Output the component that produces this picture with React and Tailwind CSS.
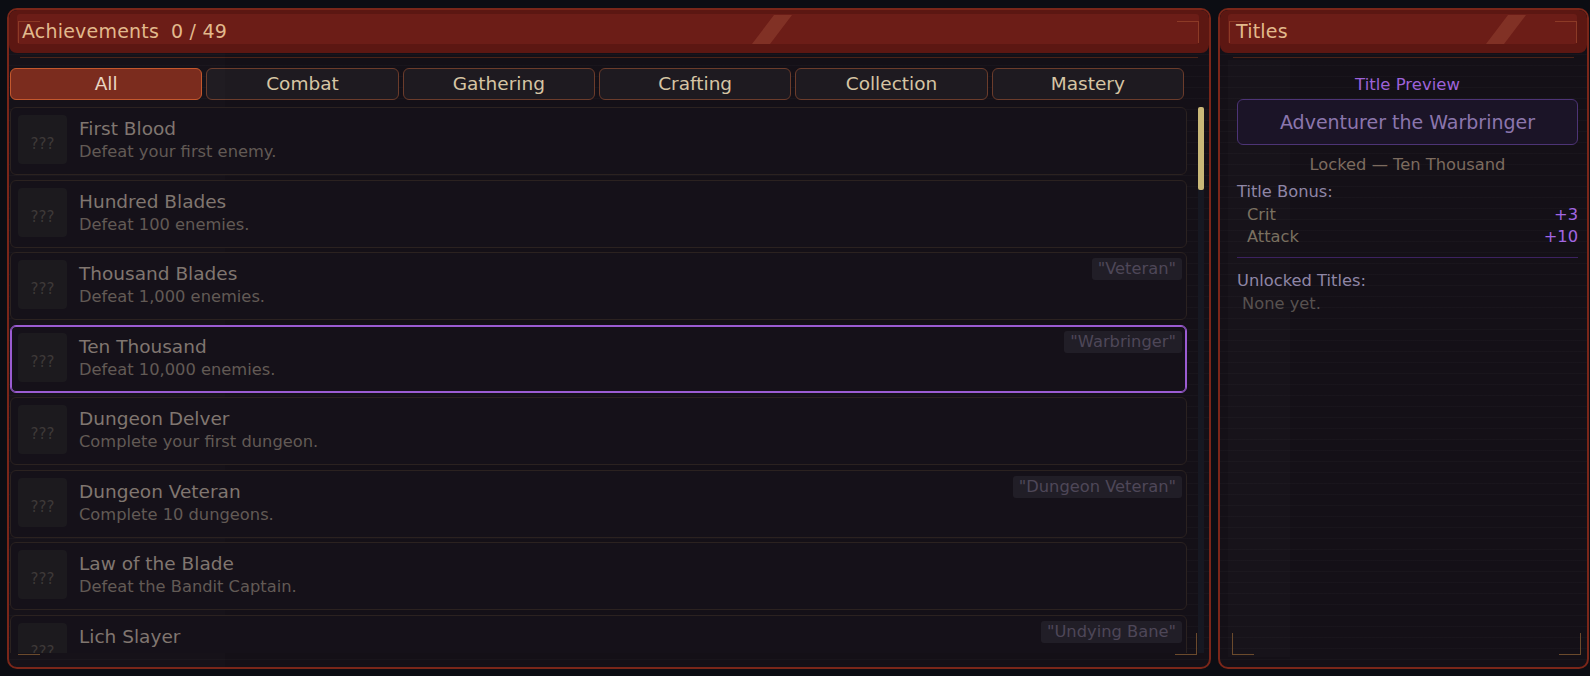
import React from "react";

const tabs = ["All", "Combat", "Gathering", "Crafting", "Collection", "Mastery"];

const achievements = [
  { name: "First Blood", desc: "Defeat your first enemy." },
  { name: "Hundred Blades", desc: "Defeat 100 enemies." },
  { name: "Thousand Blades", desc: "Defeat 1,000 enemies.", title: "Veteran" },
  { name: "Ten Thousand", desc: "Defeat 10,000 enemies.", title: "Warbringer", selected: true },
  { name: "Dungeon Delver", desc: "Complete your first dungeon." },
  { name: "Dungeon Veteran", desc: "Complete 10 dungeons.", title: "Dungeon Veteran" },
  { name: "Law of the Blade", desc: "Defeat the Bandit Captain." },
  { name: "Lich Slayer", desc: "Defeat the Lich King.", title: "Undying Bane" },
];

const scan =
  "bg-[repeating-linear-gradient(180deg,rgba(255,255,255,0.018)_0px,rgba(255,255,255,0.018)_1px,transparent_1px,transparent_11px)]";

function Bracket({ className }) {
  return <div className={`absolute w-[22px] h-[22px] border-[#6b4a2c] pointer-events-none ${className}`} />;
}

function PanelHeader({ children, stripeLeft, pad }) {
  return (
    <div className="relative h-[43px] rounded-[8px] bg-[#5c1712] overflow-hidden shrink-0">
      <div className="absolute left-[8px] right-[10px] top-[4px] h-[30px] rounded-[3px] bg-[#6c1d17]" />
      <div
        className="absolute top-[5px] h-[29px] w-[40px] bg-[#8a3b2c] opacity-70 [clip-path:polygon(55%_0,100%_0,45%_100%,0_100%)]"
        style={{ left: stripeLeft }}
      />
      <Bracket className="left-[9px] top-[11px] w-[22px] h-[20px] border-l border-t border-[#8c3a26]" />
      <Bracket className="right-[10px] top-[11px] h-[22px] border-r border-t border-[#8c3a26]" />
      <div className={`relative h-[42px] flex items-center ${pad} text-[19px] text-[#e2b98c] tracking-[0.2px]`}>
        {children}
      </div>
    </div>
  );
}

function Row({ a }) {
  return (
    <div
      className={`relative h-[68px] shrink-0 rounded-[6px] border flex ${
        a.selected
          ? "border-[#9b5cd2] shadow-[inset_0_0_0_1px_#9b5cd2] bg-[#151119]"
          : "border-[#2b2220] bg-[#151119]"
      }`}
    >
      <div className="ml-[7px] mt-[7px] w-[49px] h-[49px] rounded-[4px] bg-[#1c1a1e] flex items-center justify-center">
        <span className="translate-y-[5px] text-[15px] text-[#3e3938]">???</span>
      </div>
      <div className="ml-[12px] pt-[10px]">
        <div className="text-[18.5px] leading-[22px] text-[#807670]">{a.name}</div>
        <div className="mt-[2px] text-[16.3px] leading-[20px] text-[#625a55]">{a.desc}</div>
      </div>
      {a.title && (
        <div className="absolute right-[4px] top-[5px] h-[22px] px-[6px] rounded-[3px] bg-[#211e27] text-[16.3px] leading-[22px] text-[#4e4758]">
          "{a.title}"
        </div>
      )}
    </div>
  );
}

export default function App() {
  return (
    <div className="w-[1590px] h-[676px] overflow-hidden bg-[#0c0d13] flex gap-[7px] pl-[7px] pt-[8px] font-['DejaVu_Sans',sans-serif]">
      {/* achievements panel */}
      <div className={`relative w-[1204px] h-[661px] rounded-[10px] border-2 border-[#7a2619] bg-[#141017] ${scan} flex flex-col overflow-hidden`}>
        <div className="absolute left-0 top-0 bottom-0 w-[216px] bg-[#ffffff] opacity-[0.012] pointer-events-none" />
        <PanelHeader stripeLeft="743px" pad="pl-[13px]">
          <span>Achievements</span>
          <span className="ml-[12px]">0 / 49</span>
        </PanelHeader>
        <div className="mt-[4px] mx-[11px] h-px bg-[#4b2317] shrink-0" />
        <div className="mt-[10px] ml-[1px] w-[1174px] grid grid-cols-6 gap-[4px] shrink-0">
          {tabs.map((t, i) => (
            <div
              key={t}
              className={`h-[32px] rounded-[6px] border flex items-center justify-center text-[18.5px] ${
                i === 0
                  ? "bg-[#7a2a1c] border-[#c4572b] text-[#ead6c2]"
                  : "bg-[#1e1a20] border-[#6b3c2b] text-[#d6c5a4]"
              }`}
            >
              {t}
            </div>
          ))}
        </div>
        <div className="mt-[7px] flex h-[546px] shrink-0">
          <div className="ml-[1px] w-[1177px] flex flex-col gap-[4.5px] overflow-hidden">
            {achievements.map((a) => (
              <Row key={a.name} a={a} />
            ))}
          </div>
          <div className="ml-[11px] w-[6px] flex flex-col">
            <div className="h-[83px] rounded-[2px] bg-[#c9b878]" />
            <div className="flex-1 bg-[#161822]" />
          </div>
        </div>
        <Bracket className="left-[9px] bottom-[12px] border-b" />
        <Bracket className="right-[12px] bottom-[12px] border-r border-b" />
      </div>

      {/* titles panel */}
      <div className={`relative w-[371px] h-[661px] rounded-[10px] border-2 border-[#7a2619] bg-[#141017] ${scan} flex flex-col overflow-hidden`}>
        <div className="absolute left-[8px] top-[50px] bottom-[10px] w-[62px] bg-[#ffffff] opacity-[0.015] pointer-events-none" />
        <PanelHeader stripeLeft="266px" pad="pl-[16px]">
          <span>Titles</span>
        </PanelHeader>
        <div className="mt-[4px] mx-[13px] h-px bg-[#4b2317] shrink-0" />
        <div className="relative pl-[17px] pr-[9px] flex flex-col">
          <div className="mt-[17px] text-center text-[16.5px] leading-[20px] text-[#9d62d8]">Title Preview</div>
          <div className="mt-[4px] h-[46px] rounded-[6px] border border-[#4d3476] bg-[#1b1427] flex items-center justify-center text-[19px] text-[#8b76ad]">
            Adventurer the Warbringer
          </div>
          <div className="mt-[10px] text-center text-[16.3px] leading-[20px] text-[#7c6b5f]">Locked — Ten Thousand</div>
          <div className="mt-[6px] text-[16.3px] leading-[22px] text-[#8f86a6]">Title Bonus:</div>
          <div className="mt-[1px] pl-[10px] flex justify-between text-[16.3px] leading-[22px]">
            <span className="text-[#7a7060]">Crit</span>
            <span className="text-[#a266e2]">+3</span>
          </div>
          <div className="pl-[10px] flex justify-between text-[16.3px] leading-[22px]">
            <span className="text-[#7a7060]">Attack</span>
            <span className="text-[#a266e2]">+10</span>
          </div>
          <div className="mt-[9px] h-px bg-[#3c2260]" />
          <div className="mt-[12px] text-[16.3px] leading-[22px] text-[#8f86a6]">Unlocked Titles:</div>
          <div className="mt-[1px] pl-[5px] text-[16.3px] leading-[22px] text-[#57514f]">None yet.</div>
        </div>
        <Bracket className="left-[12px] bottom-[12px] border-l border-b" />
        <Bracket className="right-[6px] bottom-[12px] border-r border-b" />
      </div>
    </div>
  );
}
